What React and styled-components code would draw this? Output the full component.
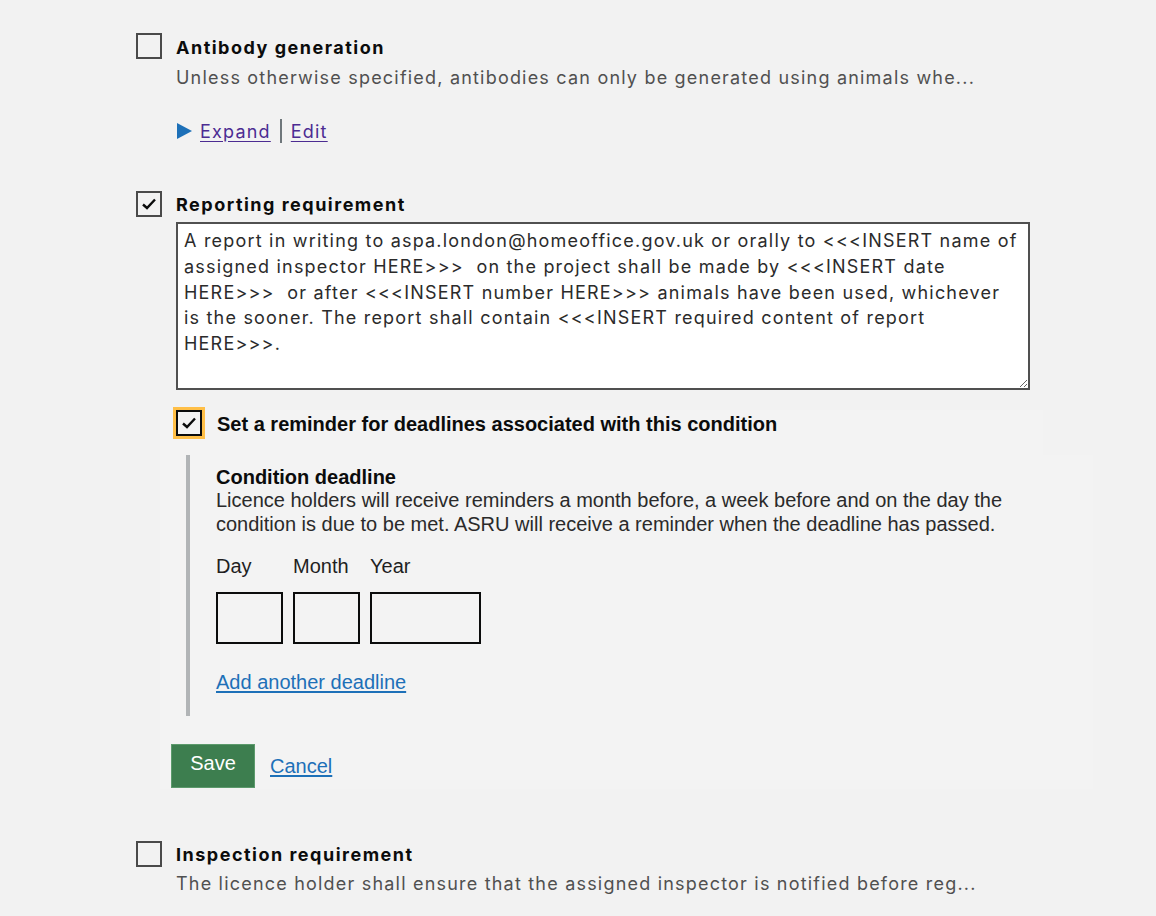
import React from 'react'
import styled, { createGlobalStyle } from 'styled-components'

const GlobalStyle = createGlobalStyle`
    body {
        margin: 0;
        background: #f2f2f2;
        font-family: Inter, "Noto Sans", sans-serif;
        color: #0b0c0c;
    }
`

const reportText = 'A report in writing to aspa.london@homeoffice.gov.uk or orally to <<<INSERT name of assigned inspector HERE>>>  on the project shall be made by <<<INSERT date HERE>>>  or after <<<INSERT number HERE>>> animals have been used, whichever is the sooner. The report shall contain <<<INSERT required content of report HERE>>>.'

const Tick = () => (
    <svg width="16" height="14" viewBox="0 0 16 14">
        <path d="M2 7.5 L6 11 L14 2.5" fill="none" stroke="#0b0c0c" strokeWidth="2.4" />
    </svg>
)

const App = () => {
    return (
        <>
        <GlobalStyle />
        <Page>
            <Condition first>
                <Box />
                <Body>
                    <Title>Antibody generation</Title>
                    <Summary>Unless otherwise specified, antibodies can only be generated using animals whe...</Summary>
                    <Actions>
                        <Arrow />
                        <VisitedLink href="#">Expand</VisitedLink>
                        <Divider />
                        <VisitedLink href="#">Edit</VisitedLink>
                    </Actions>
                </Body>
            </Condition>

            <Condition>
                <Box><Tick /></Box>
                <Body>
                    <Title tight>Reporting requirement</Title>
                    <Editor defaultValue={reportText} spellCheck={false} />

                    <ReminderRow>
                        <ReminderBox><Tick /></ReminderBox>
                        <ReminderLabel>Set a reminder for deadlines associated with this condition</ReminderLabel>
                    </ReminderRow>

                    <DeadlinePanel>
                        <Conditional>
                            <DeadlineHeading>Condition deadline</DeadlineHeading>
                            <Hint>
                                Licence holders will receive reminders a month before, a week before and on the day the
                                condition is due to be met. ASRU will receive a reminder when the deadline has passed.
                            </Hint>
                            <DateFields>
                                <DateField>
                                    <DateLabel>Day</DateLabel>
                                    <DateInput w={67} />
                                </DateField>
                                <DateField>
                                    <DateLabel>Month</DateLabel>
                                    <DateInput w={67} />
                                </DateField>
                                <DateField>
                                    <DateLabel>Year</DateLabel>
                                    <DateInput w={111} />
                                </DateField>
                            </DateFields>
                            <BlueLink href="#">Add another deadline</BlueLink>
                        </Conditional>

                        <ButtonRow>
                            <SaveButton>Save</SaveButton>
                            <BlueLink href="#">Cancel</BlueLink>
                        </ButtonRow>
                    </DeadlinePanel>
                </Body>
            </Condition>

            <Condition last>
                <Box />
                <Body>
                    <Title tight>Inspection requirement</Title>
                    <Summary>The licence holder shall ensure that the assigned inspector is notified before reg...</Summary>
                </Body>
            </Condition>
        </Page>
        </>
    )
}

const Page = styled.div`
    padding-left: 136px;
    height: 916px;
    overflow: hidden;
`

const Condition = styled.div`
    display: flex;
    gap: 14px;
    margin-top: ${p => p.first ? '33px' : p.last ? '52px' : '45px'};
`

const Box = styled.div`
    flex: none;
    width: 26px;
    height: 26px;
    box-sizing: border-box;
    border: 2px solid #4a4a4a;
    display: flex;
    align-items: center;
    justify-content: center;
`

const Body = styled.div`
    display: flex;
    flex-direction: column;
    align-items: flex-start;
`

const Title = styled.div`
    font-size: 18px;
    font-weight: 700;
    letter-spacing: 1.5px;
    line-height: ${p => p.tight ? '28px' : '30px'};
`

const Summary = styled.div`
    font-size: 18px;
    letter-spacing: 1.2px;
    line-height: 30px;
    color: #505050;
`

const Actions = styled.div`
    display: flex;
    align-items: center;
    margin-top: 23px;
    height: 30px;
    font-size: 18px;
    letter-spacing: 1.2px;
`

const Arrow = styled.span`
    width: 0;
    height: 0;
    border-top: 8px solid transparent;
    border-bottom: 8px solid transparent;
    border-left: 15px solid #1d70b8;
    margin: 0 8px 0 1px;
`

const VisitedLink = styled.a`
    color: #4c2c92;
    text-decoration: underline;
    text-underline-offset: 3px;
`

const Divider = styled.span`
    width: 2px;
    height: 24px;
    background: #6f777b;
    margin: 0 9px 0 9px;
`

const Editor = styled.textarea`
    margin-top: 3px;
    width: 854px;
    height: 168px;
    box-sizing: border-box;
    border: 2px solid #505050;
    border-radius: 0;
    padding: 4px 9px 4px 6px;
    background: #fff;
    font-family: Inter, "Noto Sans", sans-serif;
    font-size: 18px;
    letter-spacing: 1.2px;
    line-height: 25.75px;
    color: #2b2b2b;
    resize: vertical;
    outline: none;
`

const ReminderRow = styled.div`
    display: flex;
    align-items: flex-start;
    gap: 15px;
    margin-top: 20px;
    width: 867px;
    height: 45px;
    margin-left: -16px;
    padding-left: 16px;
    background: #f3f3f3;
    font-family: "Liberation Sans", Arial, sans-serif;
`

const ReminderBox = styled.div`
    flex: none;
    width: 26px;
    height: 26px;
    box-sizing: border-box;
    border: 2px solid #0b0c0c;
    outline: 3px solid #ffbf47;
    display: flex;
    align-items: center;
    justify-content: center;
`

const ReminderLabel = styled.div`
    font-size: 20px;
    font-weight: 700;
    line-height: 28px;
    color: #0b0c0c;
`

const DeadlinePanel = styled.div`
    width: 933px;
    margin-left: -16px;
    padding: 0 0 1px 26px;
    box-sizing: border-box;
    background: #f3f3f3;
    font-family: "Liberation Sans", Arial, sans-serif;
`

const Conditional = styled.div`
    border-left: 4px solid #b1b4b6;
    padding: 11px 0 22px 26px;
    color: #0b0c0c;
`

const DeadlineHeading = styled.div`
    font-size: 20px;
    font-weight: 700;
    line-height: 22px;
`

const Hint = styled.div`
    max-width: 820px;
    font-size: 20px;
    line-height: 24px;
    color: #2a2a2a;
`

const DateFields = styled.div`
    display: flex;
    gap: 10px;
    margin-top: 18px;
`

const DateField = styled.div`
    display: flex;
    flex-direction: column;
    gap: 14px;
`

const DateLabel = styled.label`
    font-size: 20px;
    line-height: 24px;
    color: #1f1f1f;
`

const DateInput = styled.input`
    width: ${p => p.w}px;
    height: 52px;
    box-sizing: border-box;
    border: 2px solid #0b0c0c;
    border-radius: 0;
    background: transparent;
    margin: 0;
    font-size: 20px;
`

const BlueLink = styled.a`
    display: inline-block;
    margin-top: 26px;
    font-size: 20px;
    line-height: 24px;
    color: #1d70b8;
    text-decoration: underline;
    text-underline-offset: 2px;
`

const ButtonRow = styled.div`
    display: flex;
    align-items: center;
    gap: 15px;
    margin-top: 28px;
    margin-left: -15px;

    ${BlueLink} {
        margin-top: 0;
    }
`

const SaveButton = styled.button`
    width: 84px;
    height: 44px;
    padding: 0 0 6px;
    border: 1px solid #5c9a6c;
    border-radius: 0;
    background: #3d7e4f;
    color: #fff;
    font-family: "Liberation Sans", Arial, sans-serif;
    font-size: 20px;
`

export default App
